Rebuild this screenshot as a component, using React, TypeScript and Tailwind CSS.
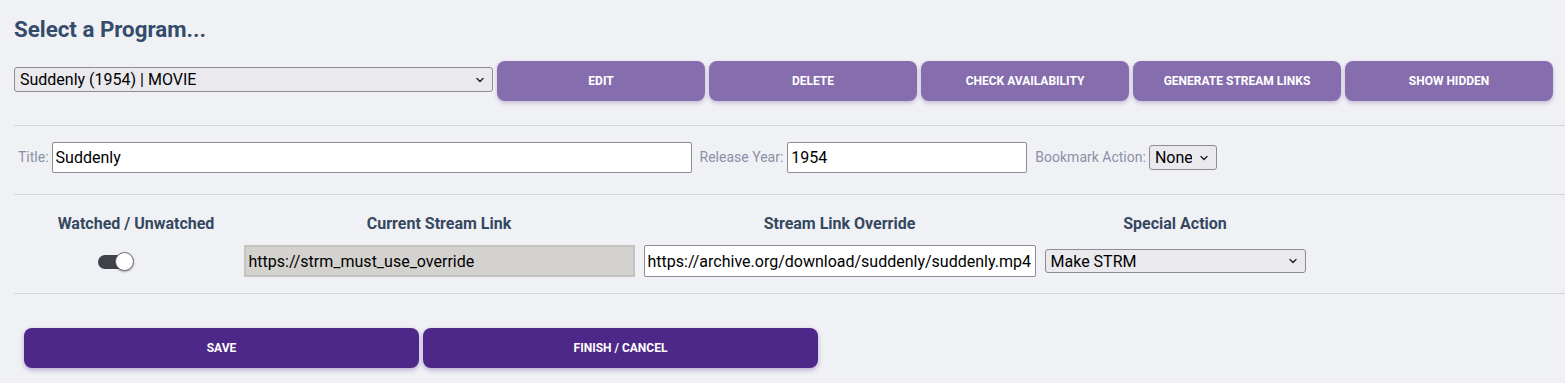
import { useState } from "react";

const actions = ["Edit", "Delete", "Check Availability", "Generate Stream Links", "Show Hidden"];

function Chevron() {
  return (
    <svg width="10" height="10" viewBox="0 0 10 10" className="pointer-events-none absolute right-[8px] top-1/2 -translate-y-1/2">
      <path d="M2 3.5 L5 6.5 L8 3.5" fill="none" stroke="#222" strokeWidth="1.4" strokeLinecap="round" strokeLinejoin="round" />
    </svg>
  );
}

function Dropdown({ value, className }: { value: string; className: string }) {
  return (
    <div className={`relative ${className}`}>
      <select
        defaultValue={value}
        className="h-full w-full appearance-none rounded-[3px] border border-[#8c8c96] bg-[#e9e9ee] pl-[5px] pr-[24px] text-[16px] text-black outline-none"
      >
        <option>{value}</option>
      </select>
      <Chevron />
    </div>
  );
}

export default function App() {
  const [watched, setWatched] = useState(true);

  return (
    <div className="min-h-screen bg-[#f0f1f5] pl-[14px] pt-[16px] font-['Roboto',sans-serif]">
      {/* header */}
      <h1 className="h-[26px] text-[22.3px] font-bold leading-[26px] text-[#344b6c]">Select a Program...</h1>

      <div className="mt-[19px] flex h-[40px] items-center">
        <Dropdown value="Suddenly (1954) | MOVIE" className="mb-[3px] h-[25px] w-[479px]" />
        <div className="ml-[4px] flex gap-[4px]">
          {actions.map((label) => (
            <button
              key={label}
              className="h-[40px] w-[208px] rounded-[8px] bg-[#866eae] text-[12px] font-bold uppercase text-white shadow-[0_2px_4px_rgba(90,60,140,0.3)]"
            >
              {label}
            </button>
          ))}
        </div>
      </div>

      <hr className="mt-[24px] border-t border-[#d4d5da]" />

      {/* title / year / bookmark */}
      <div className="mt-[16px] flex h-[31px] items-center text-[14px] text-[#8a91a6]">
        <span className="ml-[4px] mr-[3px]">Title:</span>
        <input
          defaultValue="Suddenly"
          className="h-[31px] w-[640px] rounded-[2px] border border-[#8c8c96] bg-white px-[3px] text-[16px] text-black outline-none"
        />
        <span className="ml-[8px] mr-[4px]">Release Year:</span>
        <input
          defaultValue="1954"
          className="h-[31px] w-[240px] rounded-[2px] border border-[#8c8c96] bg-white px-[3px] text-[16px] text-black outline-none"
        />
        <span className="ml-[8px] mr-[3px]">Bookmark Action:</span>
        <Dropdown value="None" className="h-[25px] w-[68px]" />
      </div>

      <hr className="mt-[21px] border-t border-[#d4d5da]" />

      {/* stream table */}
      <div className="ml-[19px] mt-[19px] grid grid-cols-[206px_400px_401px_270px] items-center text-center">
        <div className="h-[20px] text-[16px] font-bold leading-[20px] text-[#35485f]">Watched / Unwatched</div>
        <div className="h-[20px] text-[16px] font-bold leading-[20px] text-[#35485f]">Current Stream Link</div>
        <div className="h-[20px] text-[16px] font-bold leading-[20px] text-[#35485f]">Stream Link Override</div>
        <div className="h-[20px] text-[16px] font-bold leading-[20px] text-[#35485f]">Special Action</div>

        <div className="mt-[11px] flex h-[32px] items-center pl-[65px]">
          <button onClick={() => setWatched(!watched)} className="relative h-[19px] w-[36px]">
            <span className="absolute left-0 top-[3px] h-[14px] w-[30px] rounded-full bg-[#41414a]" />
            <span
              className={`absolute top-0 h-[19px] w-[19px] rounded-full border border-[#6b6b75] bg-white shadow-[0_1px_2px_rgba(0,0,0,0.35)] ${
                watched ? "left-[17px]" : "left-0"
              }`}
            />
          </button>
        </div>
        <div className="mt-[11px] flex h-[32px] justify-center">
          <input
            disabled
            defaultValue="https://strm_must_use_override"
            className="h-[32px] w-[391px] border-2 border-[#c4c2bf] bg-[#d4d2cf] px-[3px] text-[16px] text-black"
          />
        </div>
        <div className="mt-[11px] flex h-[32px] justify-center">
          <input
            defaultValue="https://archive.org/download/suddenly/suddenly.mp4"
            className="h-[32px] w-[392px] rounded-[2px] border border-[#8c8c96] bg-white px-[3px] text-[16px] text-black outline-none"
          />
        </div>
        <div className="mt-[11px] flex h-[32px] items-center justify-center">
          <Dropdown value="Make STRM" className="h-[24px] w-[261px]" />
        </div>
      </div>

      <hr className="mt-[16px] border-t border-[#d4d5da]" />

      <div className="ml-[10px] mt-[34px] flex gap-[4px] pb-[16px]">
        <button className="h-[40px] w-[395px] rounded-[8px] bg-[#4e2889] text-[12px] font-bold uppercase text-white shadow-[0_2px_5px_rgba(78,40,137,0.35)]">
          Save
        </button>
        <button className="h-[40px] w-[395px] rounded-[8px] bg-[#4e2889] text-[12px] font-bold uppercase text-white shadow-[0_2px_5px_rgba(78,40,137,0.35)]">
          Finish / Cancel
        </button>
      </div>
    </div>
  );
}
